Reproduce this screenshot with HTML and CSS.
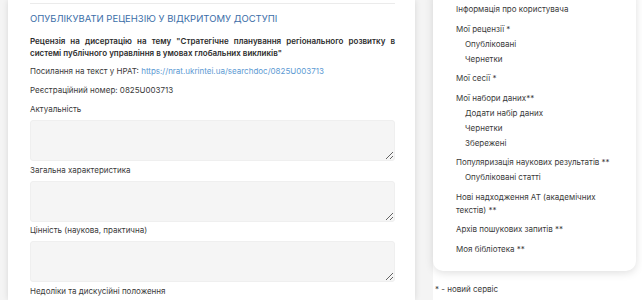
FILE: index.html
```html
<!DOCTYPE html>
<html lang="uk">
<head>
    <meta charset="UTF-8">
    <meta name="viewport" content="width=device-width, initial-scale=1.0">
    <title>Опублікувати рецензію</title>
    <link rel="stylesheet" href="styles.css">
</head>
<body>

<div class="layout">
    <main class="review">
        <div class="top-line"></div>
        <h2 class="review-title">Опублікувати рецензію у відкритому доступі</h2>
        <p class="theme">Рецензія на дисертацію на тему "Стратегічне планування регіонального розвитку в системі публічного управління в умовах глобальних викликів"</p>
        <p class="meta">Посилання на текст у НРАТ: <a href="#">https://nrat.ukrintei.ua/searchdoc/0825U003713</a></p>
        <p class="meta">Реєстраційний номер: 0825U003713</p>

        <div class="field">
            <label for="f1">Актуальність</label>
            <textarea id="f1"></textarea>
        </div>
        <div class="field">
            <label for="f2">Загальна характеристика</label>
            <textarea id="f2"></textarea>
        </div>
        <div class="field">
            <label for="f3">Цінність (наукова, практична)</label>
            <textarea id="f3"></textarea>
        </div>
        <div class="field">
            <label for="f4">Недоліки та дискусійні положення</label>
            <textarea id="f4"></textarea>
        </div>
    </main>

    <aside class="sidebar">
        <nav class="menu-card">
            <ul class="menu">
                <li><a href="#">Інформація про користувача</a></li>
                <li><a href="#">Мої рецензії *</a>
                    <ul class="submenu">
                        <li><a href="#">Опубліковані</a></li>
                        <li><a href="#">Чернетки</a></li>
                    </ul>
                </li>
                <li><a href="#">Мої сесії *</a></li>
                <li><a href="#">Мої набори даних**</a>
                    <ul class="submenu">
                        <li><a href="#">Додати набір даних</a></li>
                        <li><a href="#">Чернетки</a></li>
                        <li><a href="#">Збережені</a></li>
                    </ul>
                </li>
                <li><a href="#">Популяризація наукових результатів **</a>
                    <ul class="submenu">
                        <li><a href="#">Опубліковані статті</a></li>
                    </ul>
                </li>
                <li><a href="#">Нові надходження АТ (академічних текстів) **</a></li>
                <li><a href="#">Архів пошукових запитів **</a></li>
                <li><a href="#">Моя бібліотека **</a></li>
            </ul>
        </nav>
        <p class="note">* - новий сервіс</p>
    </aside>
</div>

</body>
</html>
```

FILE: styles.css
```css
body {
    margin: 0;
    padding: 0;
    font-family: Inter, "Noto Sans", sans-serif;
    font-size: 8px;
    color: #3a3a3a;
    background-color: #f4f4f4;
    overflow: hidden;
}
.layout {
    display: flex;
    gap: 18px;
    padding-left: 8px;
    height: 300px;
}
.review {
    width: 407px;
    box-sizing: border-box;
    padding: 3px 20px 0 22px;
    background-color: #fff;
    box-shadow: 0 0 6px rgba(0, 0, 0, 0.12);
}
.top-line {
    height: 1px;
    background-color: #ebebeb;
}
.review-title {
    margin: 8px 0 10px;
    font-size: 9.5px;
    line-height: 14px;
    font-weight: 400;
    text-transform: uppercase;
    color: #3b6ea8;
}
.theme {
    margin: 0 0 6px;
    font-weight: 600;
    line-height: 11.5px;
    text-align: justify;
    color: #2c2c2c;
}
.meta {
    margin: 0 0 7px;
    line-height: 12px;
}
.meta a {
    color: #5d9ad3;
    text-decoration: none;
}
.field {
    margin-bottom: 2.5px;
}
.field label {
    display: block;
    line-height: 12px;
    margin-bottom: 5px;
}
.field textarea {
    display: block;
    width: 100%;
    height: 41px;
    box-sizing: border-box;
    background-color: #f5f5f5;
    border: 1px solid #efefef;
    border-radius: 3px;
}
.sidebar {
    flex: 1;
    background-color: #fff;
}
.menu-card {
    margin: -14px 6px 0 0;
    padding: 17px 10px 15px 23px;
    background-color: #fff;
    border-radius: 10px;
    box-shadow: 0 2px 8px rgba(0, 0, 0, 0.13);
}
.menu,
.submenu {
    list-style: none;
    margin: 0;
    padding: 0;
}
.menu > li {
    line-height: 13px;
    margin-bottom: 6.5px;
}
.menu > li:last-child {
    margin-bottom: 0;
}
.submenu {
    margin-top: 2px;
    padding-left: 9px;
}
.submenu li {
    margin-top: 2px;
}
.menu a {
    color: #3a3a3a;
    text-decoration: none;
}
.note {
    margin: 12px 0 0 2px;
    line-height: 12px;
}
```
